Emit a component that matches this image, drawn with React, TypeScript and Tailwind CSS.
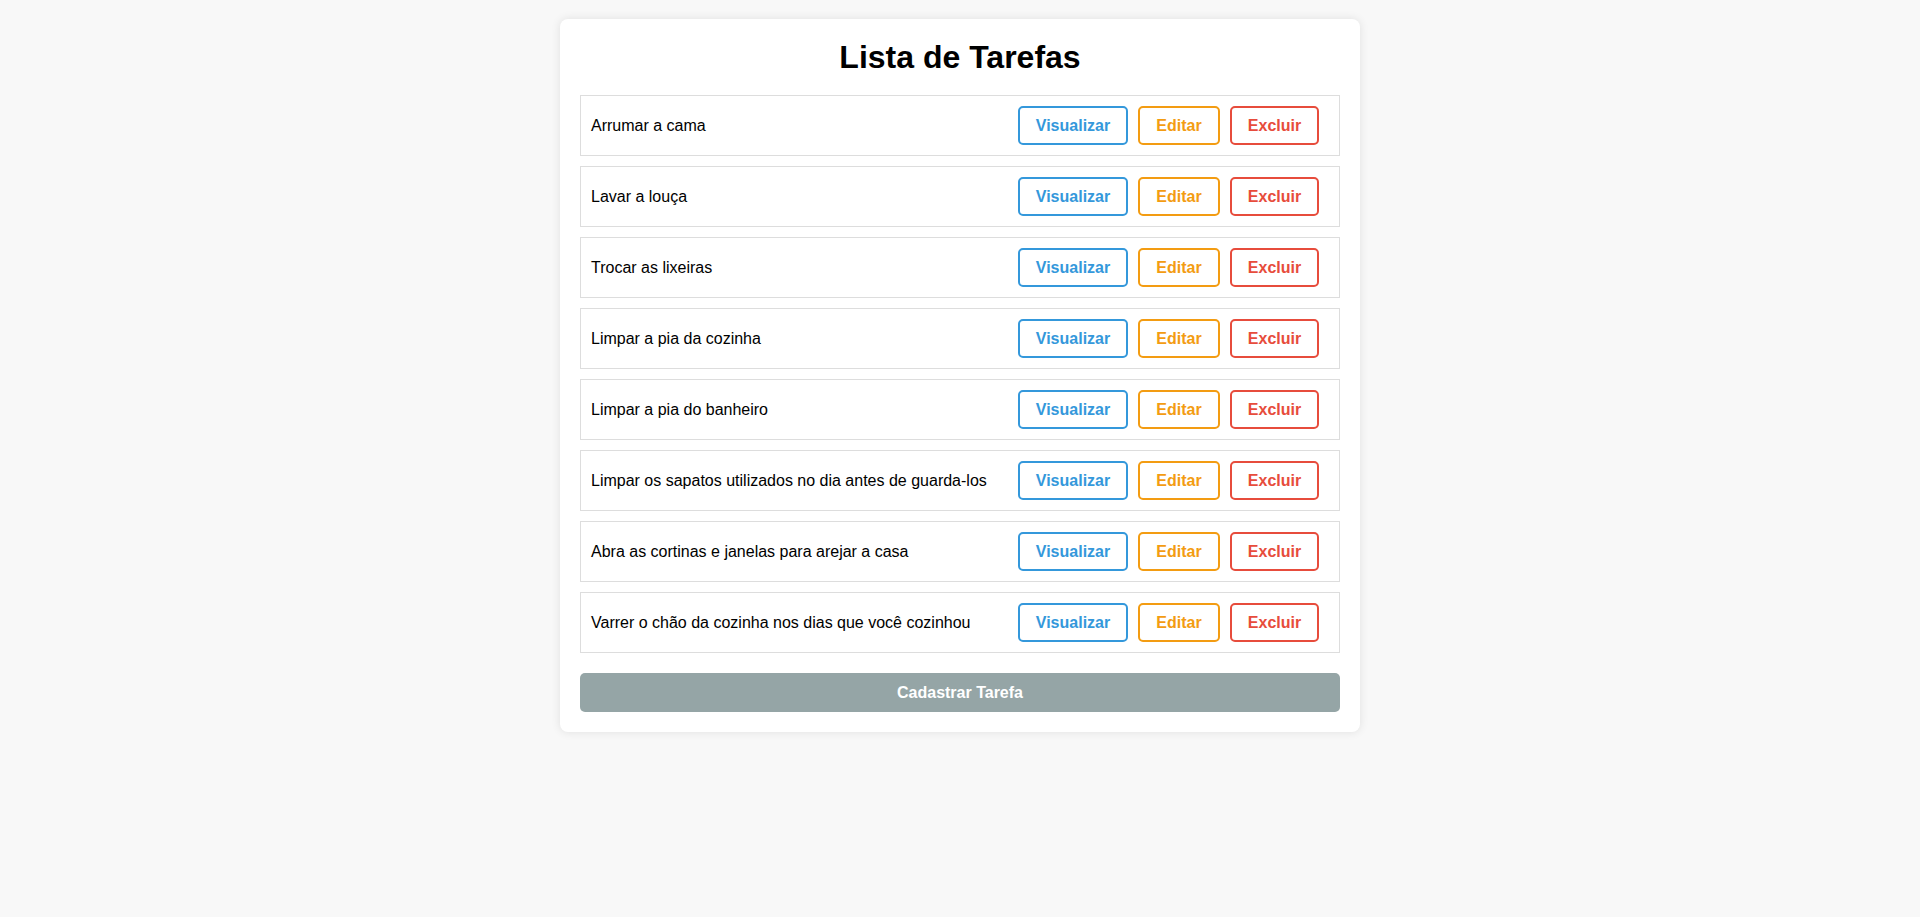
import React from "react";

const tasks = [
  "Arrumar a cama",
  "Lavar a louça",
  "Trocar as lixeiras",
  "Limpar a pia da cozinha",
  "Limpar a pia do banheiro",
  "Limpar os sapatos utilizados no dia antes de guarda-los",
  "Abra as cortinas e janelas para arejar a casa",
  "Varrer o chão da cozinha nos dias que você cozinhou",
];

export default function App() {
  return (
    <div
      className="min-h-[917px] w-full bg-[#f8f8f8] pt-[19px]"
      style={{ fontFamily: '"Liberation Sans", Arial, sans-serif' }}
    >
      <div className="mx-auto w-[800px] rounded-[8px] bg-white p-[20px] shadow-[0_0_10px_rgba(0,0,0,0.1)]">
        <h1 className="mb-[19px] text-center text-[32px] font-bold leading-[37px] text-black">
          Lista de Tarefas
        </h1>
        <ul className="flex flex-col gap-[10px]">
          {tasks.map((t) => (
            <li
              key={t}
              className="flex h-[61px] items-center justify-between border border-[#ddd] pl-[10px] pr-[20px]"
            >
              <span className="text-[16px] text-black">{t}</span>
              <div className="flex gap-[10px]">
                <button className="h-[39px] w-[110px] rounded-[5px] border-2 border-[#3498db] bg-white text-[16px] font-bold text-[#3498db]">
                  Visualizar
                </button>
                <button className="h-[39px] w-[82px] rounded-[5px] border-2 border-[#f39c12] bg-white text-[16px] font-bold text-[#f39c12]">
                  Editar
                </button>
                <button className="h-[39px] w-[89px] rounded-[5px] border-2 border-[#e74c3c] bg-white text-[16px] font-bold text-[#e74c3c]">
                  Excluir
                </button>
              </div>
            </li>
          ))}
        </ul>
        <button className="mt-[20px] h-[39px] w-full rounded-[5px] bg-[#95a5a6] text-[16px] font-bold text-white">
          Cadastrar Tarefa
        </button>
      </div>
    </div>
  );
}
